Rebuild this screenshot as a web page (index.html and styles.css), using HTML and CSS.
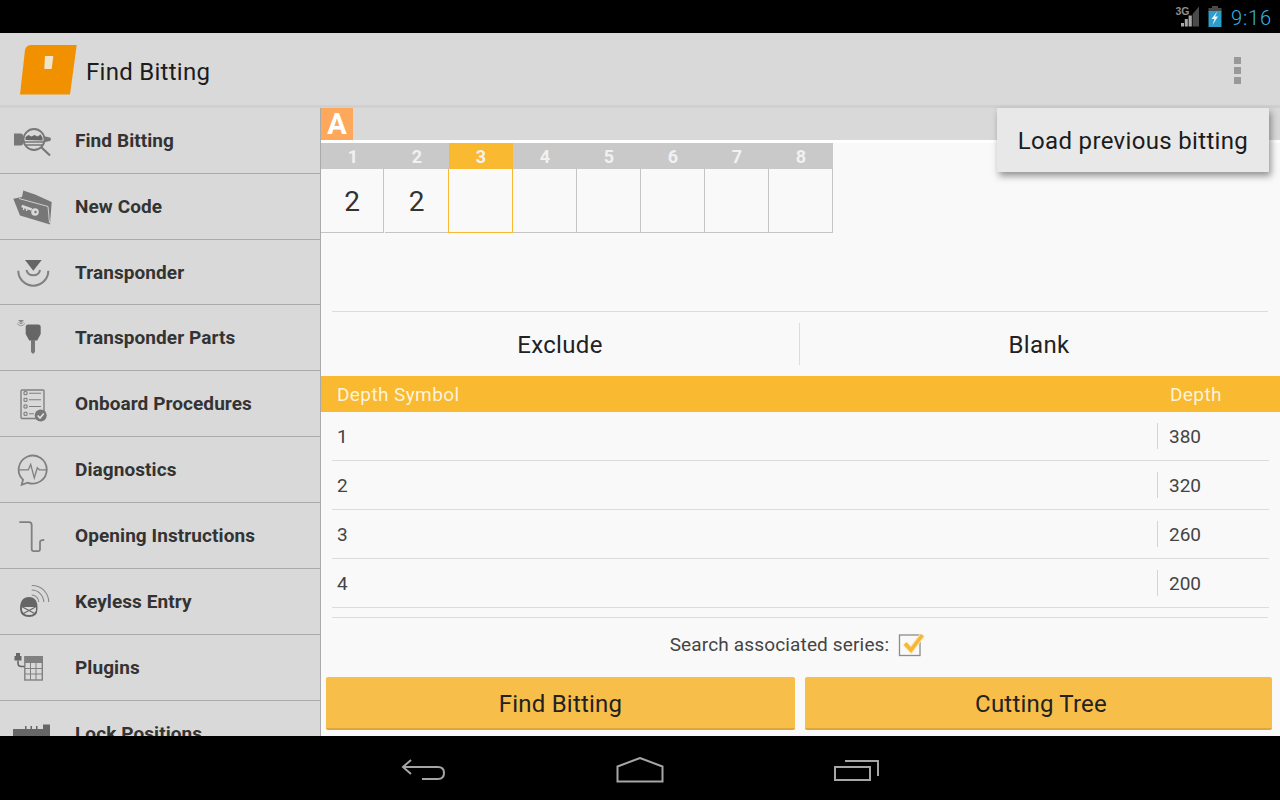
FILE: index.html
```html
<!DOCTYPE html>
<html lang="en">
<head>
<meta charset="utf-8">
<title>Find Bitting</title>
<link rel="stylesheet" href="styles.css">
</head>
<body>
<div class="app">
  <header class="status">
    <svg class="st-signal" width="26" height="22" viewBox="0 0 26 22">
      <text x="1.500" y="8.500" class="st-3g">3G</text>
      <path d="M7 20.500h3V17H7zM10.800 20.500h3v-7.500h-3zM14.600 20.500h3.200V9.500h-3.200z" fill="#a8a8a8"/>
      <path d="M18.600 20.500H25V.5L18.600 8z" fill="#4a4a4a"/>
    </svg>
    <svg class="st-batt" width="16" height="22" viewBox="0 0 16 22">
      <path d="M5 0h6v2H5zM1.500 2h13v4h-13z" fill="#4a4a4a"/>
      <path d="M1.500 5h13v16h-13z" fill="#2c9ecb"/>
      <path d="M10.500 5 4.500 13h3l-2 6 5.500-8.500H8z" fill="#e8f6fb"/>
    </svg>
    <span class="clock">9:16</span>
  </header>

  <div class="actionbar">
    <svg class="logo" width="58" height="50" viewBox="0 0 58 50">
      <path d="M12.700 0H57.700L51 49.500H1L6 5Q7 0 12.700 0z" fill="#f29100"/>
      <path d="M26 11h8.300l-1.600 13h-7.400z" fill="#f0e4cc"/>
    </svg>
    <h1 class="title">Find Bitting</h1>
    <div class="overflow"><i></i><i></i><i></i></div>
  </div>

  <div class="content">
    <nav class="sidebar">
      <div class="nav-item">
        <svg class="ni" viewBox="0 0 40 32" width="40" height="32"><path d="M1 8.500h7l2 1v10l-2 1H1z" fill="#777"/><path d="M30 11l7 1.500q2 1.500 0 3.500l-7 1.500z" fill="#777"/><circle cx="21" cy="14.500" r="10.500" fill="#d9d9d9" stroke="#777" stroke-width="1.800"/><path d="M12.500 15v-3l3-2 3 1.500 3-1.500 3 1.500 3-2 2 3v3z" fill="#666"/><path d="M11 17h20M12.500 20h17" stroke="#777" stroke-width="1.300"/><path d="M28.500 22.500l8.500 8" stroke="#777" stroke-width="2.200"/></svg>
        <span>Find Bitting</span>
      </div>
      <div class="nav-item">
        <svg class="ni" viewBox="0 0 40 36" width="40" height="36"><path d="M10.300 1.500 22 5.500 38.700 13 37 35.500 7 26.500.3 9.800 9 8z" fill="#777"/><path d="M6 9.500 35 17.500 36.500 34" fill="none" stroke="#d9d9d9" stroke-width=".9"/><path d="M8.700 17l10 3.500" stroke="#d9d9d9" stroke-width="2.400"/><circle cx="22" cy="23" r="3.800" fill="#d9d9d9"/><circle cx="22.500" cy="23" r="1.200" fill="#777"/><path d="M11 18l-.5 3M14 19l-.5 3" stroke="#d9d9d9" stroke-width="1.400"/></svg>
        <span>New Code</span>
      </div>
      <div class="nav-item nav-short">
        <svg class="ni" viewBox="0 0 40 32" width="40" height="32"><path d="M12 4h16.700l-8.400 10.700z" fill="#666"/><path d="M13.500 14a7 7 0 0 0 13.600 0M5.300 14.700a15 15 0 0 0 30 0" fill="none" stroke="#808080" stroke-width="2"/></svg>
        <span>Transponder</span>
      </div>
      <div class="nav-item">
        <svg class="ni" viewBox="0 0 40 36" width="40" height="36"><path d="M12.700 7q0-2.500 2.500-2.500h10q2.500 0 2.500 2.500v7l-3.500 6.500h-8l-3.500-6.500z" fill="#666"/><path d="M18 20h4v12l-2 2-2-2z" fill="#777"/><path d="M5 0h6L8 3z" fill="#888"/><path d="M5.500 2.500q2.500 2.500 5 0M4 3.500q4 4.500 8 0" fill="none" stroke="#888" stroke-width=".8"/></svg>
        <span>Transponder Parts</span>
      </div>
      <div class="nav-item">
        <svg class="ni" viewBox="0 0 40 36" width="40" height="36"><rect x="8" y="4" width="23" height="28.500" rx="1" fill="none" stroke="#808080" stroke-width="1.400"/><path d="M11 5.700h3v3h-3zM11 12.300h3v3h-3zM11 19h3v3h-3zM11 26.300h3v3h-3z" fill="none" stroke="#777"/><path d="M16 7.200h12M16 13.800h12M16 20.500h12M16 27.800h5" stroke="#808080" stroke-width="1.100"/><circle cx="27.700" cy="29.500" r="6" fill="#777"/><path d="M24.700 29.500l2.300 2.500 3.800-4.500" fill="none" stroke="#e4e4e4" stroke-width="1.500"/></svg>
        <span>Onboard Procedures</span>
      </div>
      <div class="nav-item">
        <svg class="ni" viewBox="0 0 40 34" width="40" height="34"><path d="M10 26.700A14 14 0 1 1 14.500 29.600L8.700 31.800z" fill="none" stroke="#808080" stroke-width="1.800"/><path d="M6.300 16.800h9l2.400-5.300 3.600 13.300 3-10 2 2h8" fill="none" stroke="#808080" stroke-width="1.300"/></svg>
        <span>Diagnostics</span>
      </div>
      <div class="nav-item">
        <svg class="ni" viewBox="0 0 40 34" width="40" height="34"><path d="M6.300 3.200H16q2.700 0 2.700 3.300v23.300q0 2.400 2 2.400h4.600q1.700 0 1.700-2.400v-6.600q0-2.400 4.300-2.400" fill="none" stroke="#808080" stroke-width="1.800"/></svg>
        <span>Opening Instructions</span>
      </div>
      <div class="nav-item">
        <svg class="ni" viewBox="0 0 40 34" width="40" height="34"><path d="M7 24q0-12 9-12t8.500 12q0 8-8.500 8t-9-8z" fill="#666"/><path d="M9 22h14v3q-1 5-7 5t-7-5z" fill="#dcdcdc"/><path d="M9.500 22l13 7M22.500 22l-13 7" stroke="#666" stroke-width="1.200"/><path d="M18.700 10a7 7 0 0 1 7 7M18.700 5a12 12 0 0 1 12 12M18.700 .5a16.500 16.500 0 0 1 17 16.500" fill="none" stroke="#888" stroke-width="1.100"/></svg>
        <span>Keyless Entry</span>
      </div>
      <div class="nav-item">
        <svg class="ni" viewBox="0 0 40 34" width="40" height="34"><rect x="11.800" y="5.700" width="17.500" height="23.300" fill="none" stroke="#808080" stroke-width="1.400"/><path d="M12 6h17v6H12z" fill="#808080"/><path d="M12 17.500h17M12 23h17M17.500 12v17M23 12v17" stroke="#808080" stroke-width="1"/><path d="M3 2h4v3h1.500v4.500h-7V5H3z" fill="#666"/><path d="M5 9.500V12q0 3.500 3.500 3.500h3" fill="none" stroke="#666" stroke-width="1.600"/></svg>
        <span>Plugins</span>
      </div>
      <div class="nav-item">
        <svg class="ni" viewBox="0 0 40 34" width="40" height="34"><path d="M0 12h12V9h1.500v3h4V9H19v3h4V9h1.500v3H30V7.500h7V32H0z" fill="#666"/></svg>
        <span>Lock Positions</span>
      </div>
    </nav>

    <main class="main">
      <div class="tabband"><span class="tab-a">A</span></div>
      <div class="cuts">
        <div class="cut"><div class="cut-h">1</div><div class="cut-v">2</div></div>
        <div class="cut"><div class="cut-h">2</div><div class="cut-v">2</div></div>
        <div class="cut cut-on"><div class="cut-h">3</div><div class="cut-v"></div></div>
        <div class="cut"><div class="cut-h">4</div><div class="cut-v"></div></div>
        <div class="cut"><div class="cut-h">5</div><div class="cut-v"></div></div>
        <div class="cut"><div class="cut-h">6</div><div class="cut-v"></div></div>
        <div class="cut"><div class="cut-h">7</div><div class="cut-v"></div></div>
        <div class="cut"><div class="cut-h">8</div><div class="cut-v"></div></div>
      </div>
      <div class="rule"></div>
      <div class="choice">
        <div class="choice-btn choice-first">Exclude</div>
        <div class="choice-btn choice-last">Blank</div>
      </div>
      <div class="thead"><span>Depth Symbol</span><span class="thead-d">Depth</span></div>
      <div class="trow"><span class="t-sym">1</span><span class="t-dep">380</span></div>
      <div class="trow"><span class="t-sym">2</span><span class="t-dep">320</span></div>
      <div class="trow"><span class="t-sym">3</span><span class="t-dep">260</span></div>
      <div class="trow"><span class="t-sym">4</span><span class="t-dep">200</span></div>
      <div class="search">
        <span>Search associated series:</span>
        <svg width="28" height="26" viewBox="0 0 28 26"><rect x="2.500" y="3" width="20.500" height="20.500" fill="#f9f9f9" stroke="#8c8c8c" stroke-width="1.300"/><path d="M8 11.500l6 6.500L25.500 3" fill="none" stroke="#fbe3ac" stroke-width="5.500"/><path d="M8 11.500l6 6.500L25.500 3" fill="none" stroke="#f7b733" stroke-width="3.500"/></svg>
      </div>
      <div class="actions">
        <button class="btn btn-first">Find Bitting</button>
        <button class="btn btn-second">Cutting Tree</button>
      </div>
    </main>
    <div class="popup">Load previous bitting</div>
  </div>

  <footer class="navbar">
    <svg width="46" height="24" viewBox="0 0 46 24"><path d="M11 2 3 9l8 7M3 9h35q6 0 6 6t-6 6H22" fill="none" stroke="#a6a6a6" stroke-width="2"/></svg>
    <svg width="48" height="26" viewBox="0 0 48 26"><path d="M1.500 9.500 24 1l22.500 8.500V24.500h-45z" fill="none" stroke="#a6a6a6" stroke-width="2"/></svg>
    <svg width="46" height="24" viewBox="0 0 46 24"><path d="M1 9h35v13H1z" fill="none" stroke="#a6a6a6" stroke-width="2"/><path d="M11 3h33v15" fill="none" stroke="#a6a6a6" stroke-width="2"/></svg>
  </footer>
</div>
</body>
</html>
```
FILE: styles.css
```css
* { box-sizing: border-box; }
html, body { margin: 0; height: 100%; overflow: hidden; }
body { font-family: Roboto, "Liberation Sans", sans-serif; color: #222; background: #000; }
.app { display: flex; flex-direction: column; width: 1280px; height: 800px; }

.status { flex: 0 0 33px; background: #000; display: flex; align-items: center; justify-content: flex-end; padding-right: 8px; }
.st-signal { margin-right: 7px; }
.st-3g { font: bold 10.500px "Liberation Sans", sans-serif; fill: #8f8f8f; }
.st-batt { margin-right: 8px; }
.clock { font-size: 20px; color: #33b5e5; letter-spacing: .9px; padding-top: 2px; font-weight: 300; }

.actionbar { flex: 0 0 75px; background: #d9d9d9; border-bottom: 3px solid #d0d0d0; display: flex; align-items: center; padding-left: 19px; }
.logo { margin-top: 2px; margin-right: 9px; }
.title { margin: 6px 0 0; font-size: 24px; font-weight: 400; color: #1c1c1c; letter-spacing: .28px; }
.overflow { margin-left: auto; margin-right: 39px; margin-top: 2px; display: flex; flex-direction: column; gap: 3px; }
.overflow i { display: block; width: 7px; height: 7px; background: #999; }

.content { flex: 1; display: flex; min-height: 0; position: relative; background: #f9f9f9; }

.sidebar { flex: 0 0 321px; background: #d9d9d9; border-right: 1px solid #aaa; overflow: hidden; }
.nav-item { height: 66px; display: flex; align-items: center; border-bottom: 1px solid #aaa; padding-left: 13px; font-size: 19px; font-weight: 700; color: #333; letter-spacing: .08px; }
.nav-short { height: 65px; }
.ni { flex: 0 0 40px; margin-right: 22px; }

.main { flex: 1; min-width: 0; display: flex; flex-direction: column; }
.tabband { flex: 0 0 35px; background: #d9d9d9; border-bottom: 3px solid #fff; }
.tab-a { display: block; width: 32px; height: 32px; background: #fda85a; color: #fff; font-size: 29px; font-weight: 700; line-height: 33px; text-align: center; }

.cuts { display: flex; flex: 0 0 90px; }
.cut { width: 64px; display: flex; flex-direction: column; }
.cut-h { height: 26px; background: #c9c9c9; color: #f1f1f1; font-size: 18px; font-weight: 700; text-align: center; line-height: 28px; }
.cut-v { height: 64px; border: 1px solid #c4c4c4; border-top: 0; border-left-width: 0; font-size: 28px; color: #333; text-align: center; line-height: 65px; }
.cut:first-child .cut-v { width: 63px; }
.cut-on .cut-h { background: #f9b931; }
.cut-on .cut-v { border: 1px solid #f9b931; border-top: 0; margin-left: -1px; }

.rule { flex: 0 0 1px; margin: 78px 12px 0 11px; background: #dcdcdc; }
.choice { flex: 0 0 64px; display: flex; padding-top: 11px; }
.choice-btn { height: 42px; padding-top: 2px; font-size: 24px; letter-spacing: .35px; color: #222; display: flex; align-items: center; justify-content: center; }
.choice-first { flex: 0 0 479px; border-right: 1px solid #dcdcdc; }
.choice-last { flex: 1; padding-right: 2px; }

.thead { flex: 0 0 36px; background: #f9b931; color: #fdf3dc; font-size: 19px; letter-spacing: .4px; display: flex; align-items: center; padding-left: 16px; }
.thead-d { margin-left: auto; width: 110px; }

.trow { flex: 0 0 49px; margin: 0 11px; border-bottom: 1px solid #dcdcdc; display: flex; align-items: center; font-size: 19px; color: #444; }
.t-sym { flex: 1; padding: 1px 0 0 5px; }
.t-dep { width: 111px; height: 26px; line-height: 26px; padding: 1px 0 0 11px; margin-right: 1px; border-left: 1px solid #d4d4d4; }

.search { flex: 0 0 54px; margin: 9px 12px 0 11px; border-top: 1px solid #dcdcdc; display: flex; align-items: center; justify-content: center; gap: 8px; font-size: 19px; letter-spacing: .15px; color: #444; padding-right: 5px; }

.actions { display: flex; gap: 10px; padding: 0 8px 0 5px; margin-top: 6px; }
.btn { flex: 1; height: 53px; border: 0; border-bottom: 2px solid #dfa63a; border-radius: 2px; background: #f8be4a; font: 400 24px Roboto, sans-serif; letter-spacing: .2px; color: #222; padding: 2px 0 0; }
.btn-first { flex: 0 0 469px; }
.btn-second { padding-left: 5px; }

.popup { position: absolute; top: 0; right: 11px; width: 272px; height: 64px; background: #e8e8e8; box-shadow: 2px 4px 7px rgba(60,60,60,.55); font-size: 24px; letter-spacing: .33px; padding-top: 2px; color: #1c1c1c; display: flex; align-items: center; justify-content: center; border-radius: 1px; }

.navbar { flex: 0 0 64px; background: #000; display: flex; align-items: center; justify-content: center; gap: 170px; padding-top: 4px; }
```
